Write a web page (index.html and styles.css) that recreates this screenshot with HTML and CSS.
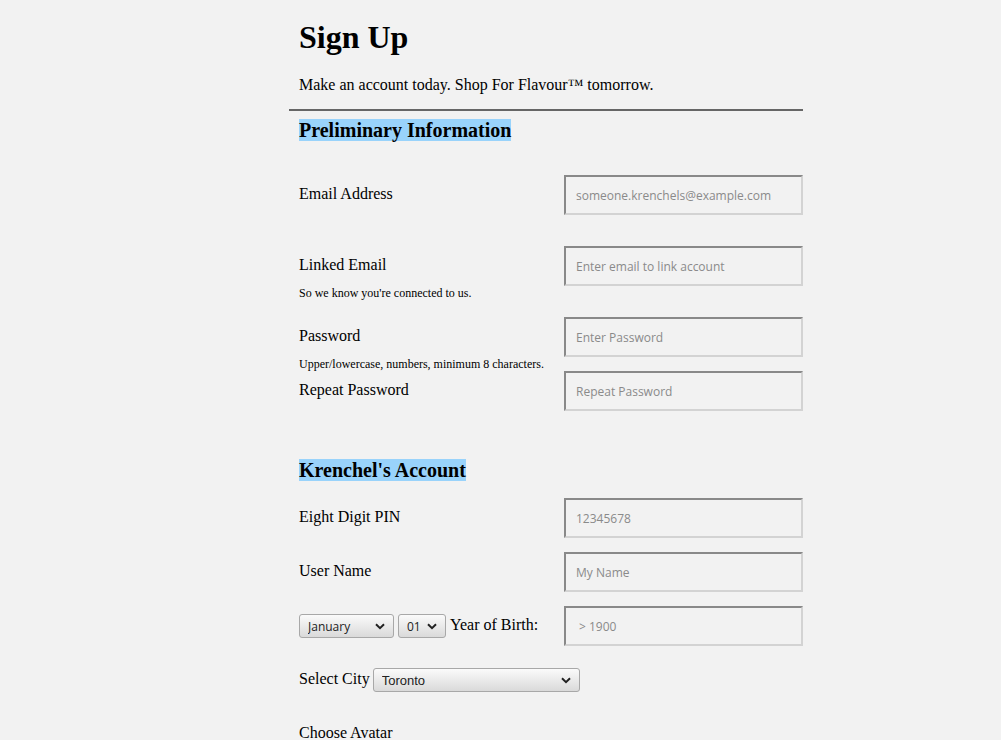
FILE: index.html
```html
<!DOCTYPE html>
<html lang="en">
<head>
<meta charset="utf-8">
<title>Sign Up</title>
<link rel="stylesheet" href="styles.css">
</head>
<body>
<main class="signup">
  <h1 class="title">Sign Up</h1>
  <p class="lead">Make an account today. Shop For Flavour™ tomorrow.</p>
  <hr class="divider">

  <h2 class="section-title section-first">Preliminary Information</h2>

  <div class="field field-email">
    <label class="field-label" for="email">Email Address</label>
    <input class="field-input" id="email" type="email" placeholder="someone.krenchels@example.com">
  </div>

  <div class="field field-linked">
    <label class="field-label" for="linked">Linked Email</label>
    <input class="field-input" id="linked" type="email" placeholder="Enter email to link account">
  </div>
  <p class="hint">So we know you're connected to us.</p>

  <div class="field field-password">
    <label class="field-label" for="pw">Password</label>
    <input class="field-input" id="pw" type="password" placeholder="Enter Password">
  </div>
  <p class="hint">Upper/lowercase, numbers, minimum 8 characters.</p>

  <div class="field field-repeat">
    <label class="field-label" for="pw2">Repeat Password</label>
    <input class="field-input" id="pw2" type="password" placeholder="Repeat Password">
  </div>

  <h2 class="section-title section-second">Krenchel's Account</h2>

  <div class="field field-pin">
    <label class="field-label" for="pin">Eight Digit PIN</label>
    <input class="field-input" id="pin" type="text" placeholder="12345678">
  </div>

  <div class="field field-user">
    <label class="field-label" for="user">User Name</label>
    <input class="field-input" id="user" type="text" placeholder="My Name">
  </div>

  <div class="field field-dob">
    <div class="dob-group">
      <select class="select select-month">
        <option>January</option>
      </select>
      <select class="select select-day">
        <option>01</option>
      </select>
      <label class="field-label" for="year">Year of Birth:</label>
    </div>
    <input class="field-input field-input-year" id="year" type="text" placeholder="&gt; 1900">
  </div>

  <div class="city-row">
    <label class="field-label" for="city">Select City</label>
    <select class="select select-city" id="city">
      <option>Toronto</option>
    </select>
  </div>

  <p class="avatar-label">Choose Avatar</p>
</main>
</body>
</html>
```

FILE: styles.css
```css
html, body {
  margin: 0;
  padding: 0;
  background: #f2f2f2;
}

body {
  font-family: "Liberation Serif", "Times New Roman", serif;
  color: #000;
}

.signup {
  width: 504px;
  margin-left: 289px;
  padding-left: 10px;
}

.title {
  margin: 19px 0 0;
  font-size: 32px;
  line-height: 37px;
  font-weight: bold;
}

.lead {
  margin: 20px 0 0;
  font-size: 16px;
  line-height: 18px;
}

.divider {
  margin: 15px 0 0 -10px;
  height: 2px;
  border: 0;
  background: #666;
}

.section-title {
  display: inline-block;
  margin: 0;
  font-size: 20px;
  line-height: 22px;
  font-weight: bold;
  background: #99d3fb;
  vertical-align: top;
}

.section-first { margin-top: 8px; }
.section-second { margin-top: 48px; }

.field {
  display: flex;
  align-items: center;
  justify-content: space-between;
}

.field-email { margin-top: 34px; }
.field-linked { margin-top: 31px; }
.field-password { margin-top: 17px; }
.field-repeat { margin-top: 0; }
.field-pin { margin-top: 17px; }
.field-user { margin-top: 14px; }
.field-dob { margin-top: 14px; }

.field-label {
  font-size: 16px;
  line-height: 18px;
  padding-bottom: 2px;
}

.field-input {
  box-sizing: border-box;
  width: 239px;
  height: 40px;
  margin: 0;
  padding: 0 10px;
  background: transparent;
  border-style: solid;
  border-width: 2px;
  border-color: #898989 #d3d3d3 #d3d3d3 #898989;
  font-family: "Open Sans", sans-serif;
  font-size: 12px;
  color: #333;
  outline: none;
}

.field-input::placeholder {
  color: #8a8a8a;
  opacity: 1;
}

.field-input-year {
  padding-left: 13px;
}

.hint {
  margin: 0;
  font-size: 12px;
  line-height: 14px;
}

.dob-group {
  display: flex;
  align-items: center;
  gap: 4px;
}

.select {
  box-sizing: border-box;
  height: 24px;
  margin: 0;
  padding: 0 22px 0 8px;
  -webkit-appearance: none;
  appearance: none;
  border: 1px solid #a8a8a8;
  border-radius: 3px;
  background-color: #ececec;
  background-image:
    url("data:image/svg+xml;utf8,<svg xmlns='http://www.w3.org/2000/svg' width='10' height='7' viewBox='0 0 10 7'><path d='M1 1.2 L5 5.2 L9 1.2' fill='none' stroke='%23222' stroke-width='2'/></svg>"),
    linear-gradient(#fbfbfb, #dadada);
  background-repeat: no-repeat, no-repeat;
  background-position: right 8px center, 0 0;
  background-size: 10px 7px, 100% 100%;
  font-family: "Open Sans", sans-serif;
  font-size: 12px;
  color: #222;
}

.select-month { width: 95px; }
.select-day { width: 48px; padding-left: 8px; }

.city-row {
  display: flex;
  align-items: center;
  gap: 3px;
  margin-top: 22px;
}

.select-city {
  width: 207px;
  font-family: "Liberation Sans", Arial, sans-serif;
  font-size: 13px;
  padding-left: 8px;
}

.avatar-label {
  margin: 32px 0 0;
  font-size: 16px;
  line-height: 18px;
}
```
